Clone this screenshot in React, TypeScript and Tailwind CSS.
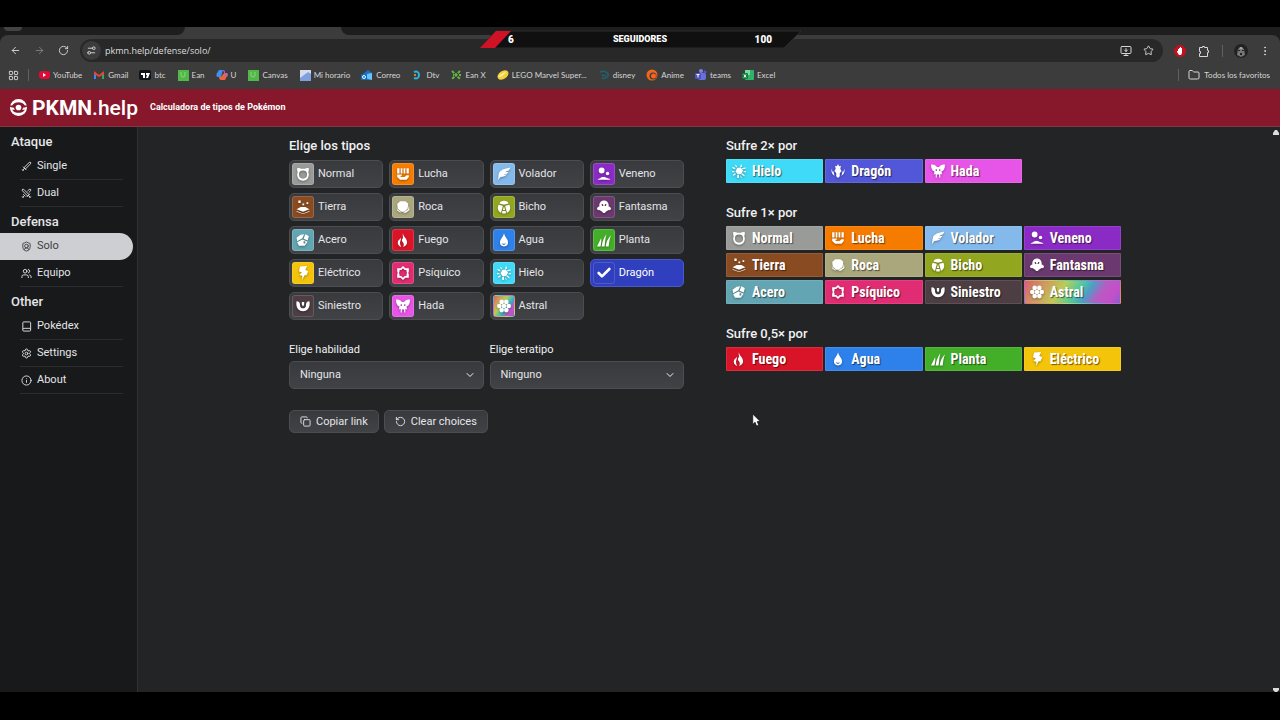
import {
  ArrowLeft,
  ArrowRight,
  Check,
  ChevronDown,
  Copy,
  EllipsisVertical,
  Folder,
  Info,
  LayoutGrid,
  MonitorDown,
  RotateCcw,
  RotateCw,
  Settings,
  Settings2,
  ShieldUser,
  Star,
  Sword,
  Swords,
  Users,
} from "lucide-react";
import type { FC, ReactNode } from "react";
import { useState } from "react";

interface PokemonType {
  name: string;
  color: string;
  icon: ReactNode;
}

// Glyphs are drawn in a 24x24 box and inherit their colour.
const types: Record<string, PokemonType> = {
  normal: {
    name: "Normal",
    color: "bg-[#999b99]",
    icon: (
      <path
        fillRule="evenodd"
        d="M2 2c3-1 5 0 7 1h6c2-1 4-2 7-1 0 3 0 5-1 7a10 10 0 1 1-18 0C2 7 2 5 2 2Zm10 4a7 7 0 1 0 0 14 7 7 0 0 0 0-14Z"
      />
    ),
  },
  lucha: {
    name: "Lucha",
    color: "bg-[#f67c00]",
    icon: (
      <path d="M2 2h4v9H2zM8 2h3v9H8zM13 2h3v9h-3zM18 2h4v9h-4zM22 14v3l-4 5H7l-5-5v-4h8v2H8v2h7l3-3z" />
    ),
  },
  volador: {
    name: "Volador",
    color: "bg-[#84b9ec]",
    icon: (
      <path d="M23 1C13 3 5 5 3 12c-1 3 0 6-2 11l5-6c5 0 9-1 11-5l-6 2 3-2c3 0 5-2 6-4l-6 1 3-2c3 0 5-3 6-6Z" />
    ),
  },
  veneno: {
    name: "Veneno",
    color: "bg-[#8b2bc5]",
    icon: (
      <>
        <circle cx="8" cy="6" r="5" />
        <circle cx="18" cy="11" r="3" />
        <path d="M1 22c0-2 4-2 6-4 2-1 6-1 8 0s8 2 8 4Z" />
      </>
    ),
  },
  tierra: {
    name: "Tierra",
    color: "bg-[#894b22]",
    icon: (
      <>
        <path d="m1 16 7-4h8l7 4-11 4Z" />
        <path d="m1 19 11 4 11-4v1l-11 4L1 20ZM4 1h4v4H4zM11 6h3v3h-3zM18 4h3v3h-3z" />
      </>
    ),
  },
  roca: {
    name: "Roca",
    color: "bg-[#aaa77d]",
    icon: (
      <>
        <path d="M7 2h9l5 4-1 9-6 5H9l-6-5-1-8Z" />
        <path d="m22 9 1 8-6 5h-5l9-6ZM1 11l1 7 6 4v-2l-6-4Z" />
      </>
    ),
  },
  bicho: {
    name: "Bicho",
    color: "bg-[#92a71f]",
    icon: (
      <path d="M6 3c4-2 8-2 12 0l2 3-8 2-8-2ZM3 8l7 2-3 12C1 19 0 13 3 8Zm18 0-7 2 3 12c6-3 7-9 4-14Zm-9 3 2 6h-4ZM9 19h6v4H9Z" />
    ),
  },
  fantasma: {
    name: "Fantasma",
    color: "bg-[#6b3970]",
    icon: (
      <path
        fillRule="evenodd"
        d="M12 1c5 0 8 4 8 8v2c2 0 4 2 4 4s-3 3-5 2c-1 2-3 2-4 3-1 3-5 3-6 0-1-1-3-1-4-3-2 1-5 0-5-2s2-4 4-4V9c0-4 3-8 8-8ZM8 7c0 3 1 4 3 3 0-2-1-3-3-3Zm8 0c-2 0-3 1-3 3 2 1 3 0 3-3Z"
      />
    ),
  },
  acero: {
    name: "Acero",
    color: "bg-[#63a5b2]",
    icon: (
      <path
        fillRule="evenodd"
        d="m8 3 6-1-3 7-9 5-1-6Zm8-1 6 3-2 8-7-3Zm-5 9 9 4-5 7H5l-3-6Zm2 3v4h3v-4Z"
      />
    ),
  },
  fuego: {
    name: "Fuego",
    color: "bg-[#d91428]",
    icon: (
      <path d="M12 0c-1 5 7 9 7 16 0 4-3 7-7 8 2-3 2-6-1-9-2-3 0-5 1-7 0-3-1-5 0-8ZM8 8c2 4-4 7 1 16-6-2-7-7-5-11 1-2 4-3 4-5Z" />
    ),
  },
  agua: {
    name: "Agua",
    color: "bg-[#2e80ea]",
    icon: (
      <path
        fillRule="evenodd"
        d="M12 1c1 5 7 10 7 15a7 7 0 0 1-14 0C5 11 11 6 12 1ZM8 17c1 4 6 4 8 0-2 2-6 2-8 0Z"
      />
    ),
  },
  planta: {
    name: "Planta",
    color: "bg-[#43af29]",
    icon: (
      <path d="M0 23 7 9c1 5 0 9-1 14Zm8 0c1-8 3-14 8-21-2 7-2 14-3 21Zm7 0c1-7 3-13 9-19-3 7-3 13-4 19Z" />
    ),
  },
  electrico: {
    name: "Eléctrico",
    color: "bg-[#f3c40a]",
    icon: <path d="m7 1 12-1-3 7 5 2-3 7h-3l-5 8 1-7-5-2 4-4-5-2Z" />,
  },
  psiquico: {
    name: "Psíquico",
    color: "bg-[#e02c72]",
    icon: (
      <path
        fillRule="evenodd"
        d="m12 0 4 4h6v5l-1 3 1 3v5h-6l-4 4-4-4H2v-5l1-3-1-3V4h6Zm0 4L9 7H6v3l-1 2 1 2v3h3l3 3 3-3h3v-3l1-2-1-2V7h-3Z"
      />
    ),
  },
  hielo: {
    name: "Hielo",
    color: "bg-[#3fdaf7]",
    icon: (
      <>
        <path d="m9 7 6-1 4 5-3 6-6 1-4-5Z" />
        <path d="m0 5 5 1 1 3-4-1ZM24 6l-6 1-1 2 6-1ZM1 19l4-3 2 1-4 3ZM22 20l-4-4-2 2 5 3ZM5 1l4 3-2 2ZM15 1l-1 4h3V1ZM0 12h4v2H0ZM20 12h4v2h-4ZM9 24v-5h3v5ZM14 19l3 4h-2Z" />
      </>
    ),
  },
  dragon: {
    name: "Dragón",
    color: "bg-[#5257d9]",
    icon: (
      <path d="m12 0 2 4 3-1-1 5 2 4-3 4v5l-3 3-3-3v-5l-3-4 2-4-1-5 3 1ZM1 8c-1 6 1 9 5 12l-2-8-1 2Zm22 0c1 6-1 9-5 12l2-8 1 2Z" />
    ),
  },
  siniestro: {
    name: "Siniestro",
    color: "bg-[#4c3e43]",
    icon: (
      <path d="M1 4c4 0 6 2 6 7 0 3 2 5 5 5s5-2 5-5c0-5 2-7 6-7 2 10-3 17-11 17S-1 14 1 4Zm9 1h4v5l-2 3-2-3Z" />
    ),
  },
  hada: {
    name: "Hada",
    color: "bg-[#e654e8]",
    icon: (
      <path
        fillRule="evenodd"
        d="M0 1c5-1 8 1 10 4h4c2-3 5-5 10-4 0 7-2 11-6 12l1 5-3-1v6h-2v-5h-4v5H8v-6l-3 1 1-5C2 12 0 8 0 1Zm8 8v3h2V9Zm6 0v3h2V9Z"
      />
    ),
  },
  astral: {
    name: "Astral",
    color:
      "bg-[linear-gradient(125deg,#d8606b_0%,#cf9a61_20%,#bccb55_38%,#4fc9a0_54%,#4b9fc8_64%,#b85bc2_76%,#c44fc9_90%,#7d63cf_100%)]",
    icon: (
      <>
        <circle cx="12" cy="12" r="4" />
        <circle cx="20" cy="12" r="4" />
        <circle cx="4" cy="12" r="4" />
        <circle cx="8" cy="5" r="4" />
        <circle cx="16" cy="5" r="4" />
        <circle cx="8" cy="19" r="4" />
        <circle cx="16" cy="19" r="4" />
      </>
    ),
  },
};

const typeOrder = [
  "normal",
  "lucha",
  "volador",
  "veneno",
  "tierra",
  "roca",
  "bicho",
  "fantasma",
  "acero",
  "fuego",
  "agua",
  "planta",
  "electrico",
  "psiquico",
  "hielo",
  "dragon",
  "siniestro",
  "hada",
  "astral",
];

const results = [
  { title: "Sufre 2× por", items: ["hielo", "dragon", "hada"] },
  {
    title: "Sufre 1× por",
    items: [
      "normal",
      "lucha",
      "volador",
      "veneno",
      "tierra",
      "roca",
      "bicho",
      "fantasma",
      "acero",
      "psiquico",
      "siniestro",
      "astral",
    ],
  },
  {
    title: "Sufre 0,5× por",
    items: ["fuego", "agua", "planta", "electrico"],
  },
];

const bookmarks: { label: string; icon: ReactNode }[] = [
  {
    label: "YouTube",
    icon: (
      <>
        <rect x="1" y="2" width="11" height="8" rx="3" fill="#e00a35" />
        <path d="m5 4 3 2-3 2Z" fill="#fff" />
      </>
    ),
  },
  {
    label: "Gmail",
    icon: (
      <>
        <path d="M1 3v7h2V5Z" fill="#4285f4" />
        <path d="M11 3v7H9V5Z" fill="#34a853" />
        <path d="m1 2 5 4 5-4v3L6 8 1 5Z" fill="#ea4335" />
      </>
    ),
  },
  {
    label: "btc",
    icon: (
      <>
        <rect y="1" width="12" height="10" rx="2" fill="#111318" />
        <path d="M2 4h4v5H4V6H2ZM7 4h4L9 9H7l1-3H7Z" fill="#fff" />
      </>
    ),
  },
  {
    label: "Ean",
    icon: (
      <>
        <rect x="1" y="1" width="11" height="11" fill="#52b848" />
        <path d="M4 3v3a2 2 0 0 0 4 0V3" stroke="#8bd680" fill="none" />
      </>
    ),
  },
  {
    label: "U",
    icon: (
      <>
        <path d="M3 1h4L5 8H2C0 8 0 6 1 4Z" fill="#3f8ff0" />
        <path d="M7 1c2 0 2 2 2 3h2c1 0 1 3 0 4L9 6Z" fill="#b264e2" />
        <path d="M5 11h4l2-4-3-3-3 4H3c0 2 1 3 2 3Z" fill="#f0643c" />
      </>
    ),
  },
  {
    label: "Canvas",
    icon: (
      <>
        <rect x="1" y="1" width="11" height="11" fill="#52b848" />
        <path d="M4 3v3a2 2 0 0 0 4 0V3" stroke="#8bd680" fill="none" />
      </>
    ),
  },
  {
    label: "Mi horario",
    icon: (
      <>
        <rect x="1" y="1" width="11" height="11" fill="#d8dcea" />
        <path d="M1 12V9l8-6 3 2v7Z" fill="#7f9fe0" />
      </>
    ),
  },
  {
    label: "Correo",
    icon: (
      <>
        <path d="m2 5 5-4 4 3v7H2Z" fill="#1c6fd0" />
        <path d="m6 5 5-1v7l-7-2Z" fill="#6cc1f5" />
        <rect y="5" width="6" height="6" rx="1" fill="#0f6cbd" />
        <circle cx="3" cy="8" r="1.5" fill="none" stroke="#fff" />
      </>
    ),
  },
  {
    label: "Dtv",
    icon: (
      <>
        <path
          d="M3 3c3-1 5 0 5 3s-2 4-5 3"
          fill="none"
          stroke="#28b4e0"
          strokeWidth="2"
        />
        <circle cx="4" cy="6" r="1" fill="#f0a030" />
      </>
    ),
  },
  {
    label: "Ean X",
    icon: (
      <path
        d="m2 2 8 8M10 2 2 10M3 6h1M9 6h2"
        stroke="#62b843"
        strokeWidth="2"
        strokeDasharray="3 1"
      />
    ),
  },
  {
    label: "LEGO Marvel Super...",
    icon: (
      <>
        <ellipse
          cx="6"
          cy="6"
          rx="6"
          ry="4"
          transform="rotate(-35 6 6)"
          fill="#f4cf3c"
        />
        <path d="M1 8c3 0 6-2 8-5L6 4 3 6Z" fill="#fff1a0" />
      </>
    ),
  },
  {
    label: "disney",
    icon: (
      <path
        d="M2 3c5-2 9 1 8 4-1 2-4 3-6 2M4 6l4 1"
        stroke="#1d6470"
        strokeWidth="1.5"
        fill="none"
      />
    ),
  },
  {
    label: "Anime",
    icon: (
      <>
        <circle cx="6" cy="6" r="5.5" fill="#f3661c" />
        <circle cx="7" cy="7" r="3.5" fill="#3c3c3c" />
        <circle cx="7.5" cy="7" r="2.5" fill="#f3661c" />
      </>
    ),
  },
  {
    label: "teams",
    icon: (
      <>
        <circle cx="6" cy="2" r="2" fill="#7b83eb" />
        <circle cx="10" cy="3" r="1.5" fill="#5059c9" />
        <rect x="3" y="4" width="8" height="7" rx="2" fill="#6a6fe0" />
        <rect y="4" width="6" height="6" rx="1" fill="#4b53bc" />
        <path d="M1.500 5.500h3M3 5.500v3" stroke="#fff" />
      </>
    ),
  },
  {
    label: "Excel",
    icon: (
      <>
        <rect x="3" y="1" width="9" height="10" rx="1" fill="#2fb36b" />
        <path d="M3 1h5v5H3Z" fill="#7fd89c" />
        <rect y="4" width="6" height="6" rx="1" fill="#107c41" />
        <path d="m2 5.500 2 3M4 5.500l-2 3" stroke="#fff" />
      </>
    ),
  },
];

const BookIcon: FC = () => (
  <svg
    viewBox="0 0 24 24"
    className="size-[11px]"
    fill="none"
    stroke="currentColor"
    strokeWidth="2"
  >
    <rect x="4" y="2" width="17" height="20" rx="2" />
    <path d="M4 18c0-1 1-2 2-2h15" />
  </svg>
);

const menu = [
  {
    title: "Ataque",
    items: [
      { label: "Single", icon: <Sword className="size-[11px]" /> },
      { label: "Dual", icon: <Swords className="size-[11px]" /> },
    ],
  },
  {
    title: "Defensa",
    items: [
      {
        label: "Solo",
        icon: <ShieldUser className="size-[11px]" />,
        active: true,
      },
      { label: "Equipo", icon: <Users className="size-[11px]" /> },
    ],
  },
  {
    title: "Other",
    items: [
      { label: "Pokédex", icon: <BookIcon /> },
      { label: "Settings", icon: <Settings className="size-[11px]" /> },
      { label: "About", icon: <Info className="size-[11px]" /> },
    ],
  },
];

const TypeGlyph: FC<{ type: PokemonType }> = ({ type }) => (
  <svg
    viewBox="0 0 24 24"
    className="size-[14px] shrink-0 fill-white drop-shadow-[0_1px_1px_rgba(0,0,0,0.35)]"
    aria-hidden="true"
  >
    {type.icon}
  </svg>
);

const FollowerBanner: FC = () => (
  <div className="absolute top-[30px] left-1/2 h-[19px] w-[322px] -translate-x-1/2">
    <svg viewBox="0 0 322 19" className="absolute inset-0 size-full">
      <path d="M17 1h305l-17 17H1Z" fill="#101010" stroke="#2a2a2a" />
      <path d="M17 1h15L16 18H1Z" fill="#cf1226" />
    </svg>
    <div className="relative grid h-full grid-cols-3 items-center px-[29px] text-[10px] font-black text-white">
      <span>6</span>
      <span className="text-center text-[9px]">SEGUIDORES</span>
      <span className="text-right">100</span>
    </div>
  </div>
);

const iconButton = "flex h-[23px] w-6 items-center justify-center";

const BrowserBar: FC = () => (
  <div className="bg-[#1e1e1e] text-[#d6d6d6]">
    <div className="flex h-2 items-start bg-[#3c3c3c]">
      <div className="h-full w-[185px] rounded-br-lg bg-[#1e1e1e] pl-1">
        <div className="h-1 w-[18px] rounded-b-full bg-[#434343]" />
      </div>
      <div className="h-full w-[156px]" />
      <div className="h-full flex-1 rounded-bl-lg bg-[#1e1e1e]" />
    </div>
    <div className="rounded-t-lg bg-[#3c3c3c]">
      <div className="flex h-[27px] items-center px-[3px] pt-1">
        <button type="button" aria-label="Atrás" className={iconButton}>
          <ArrowLeft className="size-[11px]" />
        </button>
        <button
          type="button"
          aria-label="Adelante"
          className={`${iconButton} text-[#808080]`}
        >
          <ArrowRight className="size-[11px]" />
        </button>
        <button type="button" aria-label="Recargar" className={iconButton}>
          <RotateCw className="size-[11px]" />
        </button>
        <div className="mx-[5px] flex h-[23px] flex-1 items-center rounded-full bg-[#282828] pr-[5px] pl-[2px]">
          <span className="flex size-[19px] items-center justify-center rounded-full bg-[#3c3c3c]">
            <Settings2 className="size-[11px] -scale-x-100" />
          </span>
          <input
            aria-label="Dirección"
            defaultValue="pkmn.help/defense/solo/"
            className="ml-1 flex-1 font-['Open_Sans',sans-serif] text-[9px] text-[#dedede] outline-none"
          />
          <button type="button" aria-label="Instalar" className={iconButton}>
            <MonitorDown className="size-[12px]" />
          </button>
          <button
            type="button"
            aria-label="Añadir a favoritos"
            className="flex w-5 items-center justify-center"
          >
            <Star className="size-[11px]" />
          </button>
        </div>
        <button type="button" aria-label="Bloqueador" className={iconButton}>
          <svg viewBox="0 0 12 12" className="size-3">
            <path d="M4 0h4l4 4v4l-4 4H4L0 8V4Z" fill="#c1111f" />
            <path d="M4 4h1V3h1V2h1v1h1v5L7 10H5L3 7V6h1Z" fill="#fff" />
          </svg>
        </button>
        <button type="button" aria-label="Extensiones" className={iconButton}>
          <svg
            viewBox="0 0 12 12"
            className="size-3"
            fill="none"
            stroke="currentColor"
          >
            <path
              d="M1.500 2.500h3v-1h2v1h3v3h1v2h-1v4h-8v-3h1v-2h-1Z"
              strokeLinejoin="round"
            />
          </svg>
        </button>
        <span className="mx-[6px] h-3 w-px bg-[#606060]" />
        <button type="button" aria-label="Perfil" className={iconButton}>
          <svg viewBox="0 0 14 14" className="size-[14px]">
            <circle cx="7" cy="7" r="7" fill="#222" />
            <path d="M3 11 4 5l3-2 3 2 1 6-4 2Z" fill="#777" />
            <path d="M4 6h2v1H4zM8 6h2v1H8zM6 9h2v2H6z" fill="#222" />
            <path d="m5 4 2-1 2 1-2 1Z" fill="#bbb" />
          </svg>
        </button>
        <button type="button" aria-label="Menú" className={iconButton}>
          <EllipsisVertical className="size-3" />
        </button>
      </div>
      <div className="flex h-[27px] items-center justify-between pr-[10px] pb-px pl-2 font-[Lato,sans-serif] text-[8px] text-[#d6d6d6]">
        <div className="flex items-center">
          <LayoutGrid className="size-[11px]" />
          <span className="ml-[9px] h-3 w-px bg-[#606060]" />
          <div className="ml-[9px] flex items-center gap-[11px]">
            {bookmarks.map(({ label, icon }) => (
              <a
                key={label}
                href="#"
                className="flex items-center gap-[3px] whitespace-nowrap"
              >
                <svg viewBox="0 0 12 12" className="size-3 shrink-0">
                  {icon}
                </svg>
                {label}
              </a>
            ))}
          </div>
        </div>
        <div className="flex items-center whitespace-nowrap">
          <span className="mr-[9px] h-3 w-px bg-[#606060]" />
          <button type="button" className="flex items-center gap-1">
            <Folder className="size-3" />
            Todos los favoritos
          </button>
        </div>
      </div>
    </div>
  </div>
);

const Header: FC = () => (
  <header className="flex h-[38px] items-center border-b border-[#7d3a45] bg-[#87182b] pl-[10px] text-white">
    <a href="#" className="flex items-center gap-[5px]">
      <svg viewBox="0 0 24 24" className="size-[17px]" aria-hidden="true">
        <circle cx="12" cy="12" r="12" fill="#fff" />
        <path
          d="M0 9h3c4-6 14-6 18 0h3v2h-1c-1 1-2 2-2 4-4 6-14 6-18 0 0-2-1-3-3-4Z"
          fill="#87182b"
        />
        <path d="M0 12h5l2 3H2ZM24 12h-5l-2 3h5Z" fill="#fff" />
        <circle cx="12" cy="12" r="4" fill="#fff" />
      </svg>
      <span className="text-[21px] leading-6 font-bold">
        PKMN<span className="font-medium">.help</span>
      </span>
    </a>
    <h1 className="ml-3 text-[9px] font-bold">
      Calculadora de tipos de Pokémon
    </h1>
  </header>
);

const Sidebar: FC = () => (
  <nav className="w-[138px] shrink-0 border-r border-[#303133] bg-[#18191b] text-[#e4e5e8]">
    {menu.map((group) => (
      <section key={group.title}>
        <h2 className="pt-[5px] pb-px pl-[11px] text-[13px] leading-5 font-medium">
          {group.title}
        </h2>
        <ul>
          {group.items.map(({ label, icon, active }) => (
            <li
              key={label}
              className={
                active
                  ? "mr-1 rounded-r-full bg-[#cecfd2] pl-5 text-[#3c3e42]"
                  : "pr-[14px] pl-5"
              }
            >
              <a
                href="#"
                className={`flex h-[27px] items-center gap-[5px] border-b pl-px text-[11px] ${
                  active ? "border-transparent" : "border-[#2b2c2f]"
                }`}
              >
                {icon}
                {label}
              </a>
            </li>
          ))}
        </ul>
      </section>
    ))}
  </nav>
);

const surface =
  "border border-[#4b4d51] bg-linear-to-b from-[#393a3e] to-[#414246] text-[#e4e5e8]";

const Select: FC<{ id: string; label: string; value: string }> = ({
  id,
  label,
  value,
}) => (
  <div>
    <label htmlFor={id} className="mb-[3px] block text-[11px] leading-4">
      {label}
    </label>
    <div className="relative">
      <select
        id={id}
        className={`h-7 w-full appearance-none rounded-[5px] pl-[10px] text-[11px] ${surface}`}
      >
        <option>{value}</option>
      </select>
      <ChevronDown className="pointer-events-none absolute top-2 right-2 size-3" />
    </div>
  </div>
);

const TypePicker: FC = () => {
  const [selected, setSelected] = useState("dragon");

  return (
    <div>
      <h2 className="mb-1 text-[13px] leading-5 font-medium">
        Elige los tipos
      </h2>
      <div className="grid grid-cols-4 gap-x-[6px] gap-y-[5px]">
        {typeOrder.map((key) => {
          const type = types[key];
          const isSelected = key === selected;
          return (
            <button
              key={key}
              type="button"
              aria-pressed={isSelected}
              onClick={() => setSelected(key)}
              className={`flex h-7 items-center gap-1 rounded-[5px] pl-[2px] text-[11px] ${
                isSelected
                  ? "border border-[#4a58cf] bg-[#303fbd] text-white"
                  : surface
              }`}
            >
              <span
                className={`flex size-[22px] items-center justify-center rounded-[3px] border border-white/15 ${
                  isSelected ? "" : type.color
                }`}
              >
                {isSelected ? (
                  <Check className="size-4" strokeWidth={4} />
                ) : (
                  <TypeGlyph type={type} />
                )}
              </span>
              {type.name}
            </button>
          );
        })}
      </div>
      <div className="mt-[22px] grid grid-cols-2 gap-[6px]">
        <Select id="ability" label="Elige habilidad" value="Ninguna" />
        <Select id="tera" label="Elige teratipo" value="Ninguno" />
      </div>
      <div className="mt-[21px] flex gap-[5px] text-[11px]">
        <button
          type="button"
          className={`flex h-[23px] items-center gap-[5px] rounded-[5px] px-[10px] ${surface}`}
        >
          <Copy className="size-[11px]" />
          Copiar link
        </button>
        <button
          type="button"
          className={`flex h-[23px] items-center gap-[5px] rounded-[5px] px-[10px] ${surface}`}
        >
          <RotateCcw className="size-[11px]" />
          Clear choices
        </button>
      </div>
    </div>
  );
};

const Results: FC = () => (
  <div className="flex flex-col gap-5">
    {results.map(({ title, items }) => (
      <section key={title}>
        <h2 className="mb-[3px] text-[13px] leading-5 font-medium">{title}</h2>
        <ul className="grid grid-cols-4 gap-x-[2px] gap-y-[3px]">
          {items.map((key) => (
            <li
              key={key}
              className={`flex h-6 items-center gap-[6px] rounded-[1px] border border-white/10 pl-[5px] font-['Roboto_Condensed','Liberation_Sans_Narrow',Roboto,sans-serif] text-[14px] font-bold text-white text-shadow-[1px_1px_1px_rgba(0,0,0,0.55)] ${types[key].color}`}
            >
              <TypeGlyph type={types[key]} />
              {types[key].name}
            </li>
          ))}
        </ul>
      </section>
    ))}
  </div>
);

export default function App() {
  return (
    <div className="relative flex min-h-screen flex-col bg-black font-[Roboto,sans-serif]">
      <div className="h-[27px]" />
      <BrowserBar />
      <Header />
      <div className="flex flex-1 bg-[#222425] text-[#f0f1f3]">
        <Sidebar />
        <main className="flex-1 pt-[9px]">
          <div className="mx-auto grid max-w-[832px] grid-cols-2 gap-[42px]">
            <TypePicker />
            <Results />
          </div>
        </main>
        <div className="flex w-2 flex-col justify-between pt-[3px]">
          <svg viewBox="0 0 8 5" className="w-2 fill-[#dcdcdc]">
            <path d="M3 0h2l2 3v2H1V3Z" />
          </svg>
          <svg viewBox="0 0 8 4" className="w-2 fill-[#dcdcdc]">
            <path d="M1 0h6v2L5 4H3L1 2Z" />
          </svg>
        </div>
      </div>
      <div className="h-7" />
      <FollowerBanner />
      <svg
        viewBox="0 0 12 18"
        className="absolute top-[413px] left-[752px] h-[14px] w-[9px]"
        aria-hidden="true"
      >
        <path
          d="M1 1v14l3-3 2 5 3-1-2-5h4Z"
          fill="#fff"
          stroke="#111"
          strokeWidth="1"
        />
      </svg>
    </div>
  );
}
